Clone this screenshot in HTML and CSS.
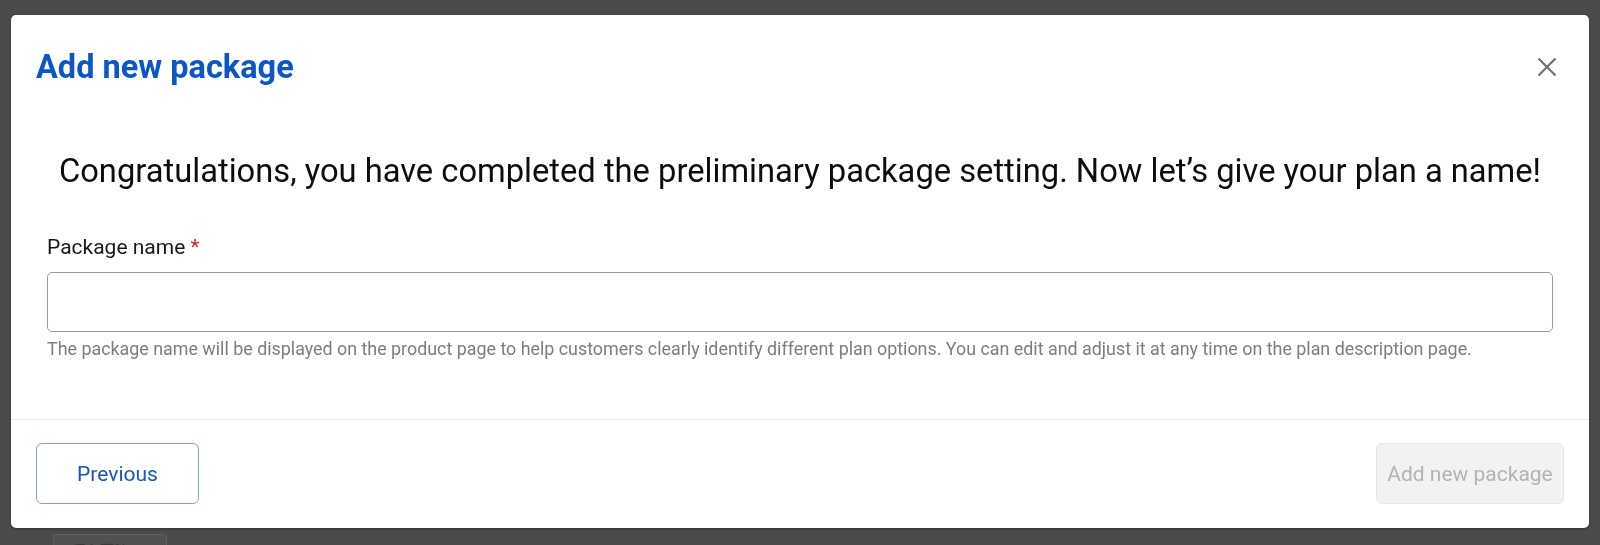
FILE: index.html
```html
<!DOCTYPE html>
<html lang="en">
<head>
<meta charset="utf-8">
<title>Add new package</title>
<link rel="stylesheet" href="styles.css">
</head>
<body>
<div class="page">
  <div class="page-row"></div>
  <div class="page-actions"><span class="page-btn">保存草稿</span></div>
</div>
<div class="overlay">
  <div class="modal" role="dialog" aria-labelledby="modal-title">
    <div class="modal-header">
      <h2 class="modal-title" id="modal-title">Add new package</h2>
      <button class="close-btn" aria-label="Close">
        <svg width="20" height="20" viewBox="0 0 20 20"><path d="M1.5 1.5 L18.5 18.5 M18.5 1.5 L1.5 18.5" stroke="#707070" stroke-width="2.2" fill="none"/></svg>
      </button>
    </div>
    <div class="modal-body">
      <p class="intro">Congratulations, you have completed the preliminary package setting. Now let’s give your plan a name!</p>
      <label class="field-label" for="pkg">Package name <span class="req">*</span></label>
      <input class="field-input" id="pkg" type="text">
      <p class="field-help">The package name will be displayed on the product page to help customers clearly identify different plan options. You can edit and adjust it at any time on the plan description page.</p>
    </div>
    <div class="modal-footer">
      <button class="btn btn-outline">Previous</button>
      <button class="btn btn-disabled" disabled>Add new package</button>
    </div>
  </div>
</div>
</body>
</html>
```
FILE: styles.css
```css
* { box-sizing: border-box; }
html, body { margin: 0; padding: 0; }
body {
  background: #4b4b4b;
  font-family: Roboto, "Noto Sans CJK SC", Arial, sans-serif;
  width: 1600px;
  height: 545px;
  overflow: hidden;
}
.page {
  height: 545px;
  display: flex;
  flex-direction: column;
}
.page-row {
  margin-top: 357px;
  height: 1px;
  background: #5a5a5a;
}
.page-actions {
  padding: 177px 0 0 53px;
}
.page-btn {
  display: inline-block;
  width: 114px;
  height: 30px;
  border: 1px solid #5e5e5e;
  border-radius: 4px;
  background: #505050;
  color: #3a3a3a;
  font-size: 14px;
  padding: 4px 0 0 18px;
}
.overlay {
  position: fixed;
  inset: 0;
  padding: 15px 11px 0 11px;
}
.modal {
  background: #fff;
  border-radius: 5px;
  box-shadow: 0 1px 3px rgba(0,0,0,0.35);
}
.modal-header {
  display: flex;
  justify-content: space-between;
  align-items: center;
  padding: 34px 32px 0 25px;
}
.modal-title {
  margin: 0;
  font-size: 32.5px;
  line-height: 36px;
  font-weight: 700;
  color: #0b57c7;
}
.close-btn {
  width: 20px;
  height: 20px;
  padding: 0;
  border: 0;
  background: none;
  display: flex;
  cursor: pointer;
}
.modal-body {
  padding: 68px 36px 60px 36px;
  display: flex;
  flex-direction: column;
}
.intro {
  margin: 0;
  text-align: center;
  font-size: 32.7px;
  line-height: 36px;
  color: #0d0d0d;
}
.field-label {
  margin-top: 46px;
  font-size: 21px;
  line-height: 24px;
  color: #1a1a1a;
}
.req { color: #d9262c; }
.field-input {
  margin-top: 13px;
  height: 60px;
  width: 100%;
  border: 1px solid #9a9a9a;
  border-radius: 5px;
  font: inherit;
  font-size: 21px;
  padding: 0 14px;
  outline: none;
}
.field-help {
  margin: 7px 0 0 0;
  font-size: 17.86px;
  line-height: 20px;
  color: #7d7d7d;
}
.modal-footer {
  border-top: 1px solid #ebebeb;
  padding: 23px 25px 24px 25px;
  display: flex;
  justify-content: space-between;
}
.btn {
  height: 61px;
  border-radius: 6px;
  font-family: inherit;
  font-size: 21px;
  line-height: 24px;
}
.btn-outline {
  width: 163px;
  background: #fff;
  border: 1px solid #7f9fe3;
  color: #1655c4;
  cursor: pointer;
}
.btn-disabled {
  width: 188px;
  background: #f2f2f2;
  border: 1px solid #e6e6e6;
  color: #b3b3b3;
}
```
